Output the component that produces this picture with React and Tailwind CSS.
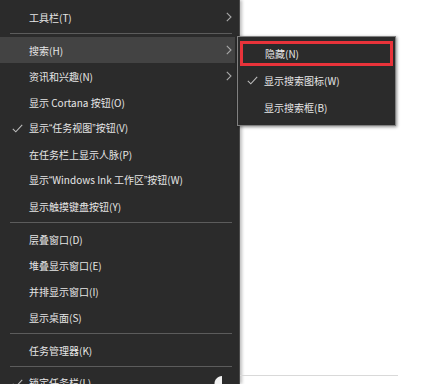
import React from "react";

const Check = ({ className = "" }) => (
  <svg width="11" height="9" viewBox="0 0 11 9" className={className}>
    <path d="M0.8 4.8 L3.8 7.8 L10.2 0.8" fill="none" stroke="#bdbdbd" strokeWidth="1.1" />
  </svg>
);

const Chevron = () => (
  <svg width="6" height="10" viewBox="0 0 6 10">
    <path d="M0.8 0.8 L5 5 L0.8 9.2" fill="none" stroke="#a8a8a8" strokeWidth="1.1" />
  </svg>
);

const Q = ({ children }) => <span className="font-['Liberation_Sans',sans-serif]">{children}</span>;

const Row = ({ label, checked, arrow, active, extra }) => (
  <div className={`h-[26px] flex items-center shrink-0 ${active ? "bg-[#434343] mr-[4px]" : ""}`}>
    <div className="w-[29px] shrink-0 flex items-center pl-[12px]">{checked ? <Check /> : null}</div>
    <span className="flex-1 whitespace-nowrap">{label}</span>
    {arrow ? (
      <div className={`flex items-center ${active ? "pr-[3px]" : "pr-[7px]"}`}>
        <Chevron />
      </div>
    ) : null}
    {extra}
  </div>
);

const Sep = () => (
  <div className="h-[7px] shrink-0 flex items-center pl-[10px] pr-[7px]">
    <div className="h-px w-full bg-[#5c5c5c]" />
  </div>
);

export default function App() {
  return (
    <div className="w-[424px] h-[384px] bg-white relative overflow-hidden flex font-['Noto_Sans_CJK_SC','Noto_Sans',sans-serif] text-[10px] text-[#e6e6e6]">
      <div className="w-[240px] h-full bg-[#2b2b2b] border-r border-[#4a4a4a] shadow-[2px_0_3px_rgba(0,0,0,0.25)] flex flex-col pt-[4px] shrink-0">
        <Row label="工具栏(T)" arrow />
        <Sep />
        <Row label="搜索(H)" arrow active />
        <Row label="资讯和兴趣(N)" arrow />
        <Row label="显示 Cortana 按钮(O)" />
        <Row label={<>显示<Q>“</Q>任务视图<Q>”</Q>按钮(V)</>} checked />
        <Row label="在任务栏上显示人脉(P)" />
        <Row label={<>显示<Q>“</Q>Windows Ink 工作区<Q>”</Q>按钮(W)</>} />
        <Row label="显示触摸键盘按钮(Y)" />
        <Sep />
        <Row label="层叠窗口(D)" />
        <Row label="堆叠显示窗口(E)" />
        <Row label="并排显示窗口(I)" />
        <Row label="显示桌面(S)" />
        <Sep />
        <Row label="任务管理器(K)" />
        <Sep />
        <div className="h-[26px] flex items-start shrink-0">
          <div className="w-[29px] shrink-0 flex items-center pl-[12px] h-[26px]">
            <Check />
          </div>
          <span className="flex-1 whitespace-nowrap leading-[26px]">锁定任务栏(L)</span>
          <svg width="9" height="12" viewBox="0 0 9 12" className="mt-[6px] mr-[16px]">
            <path d="M8 0 C3.5 0.5 0.5 3.5 0.5 7.5 L0.5 12 L8 12 Z" fill="#f2f2f2" />
          </svg>
        </div>
      </div>

      <div className="flex-1 flex flex-col">
        <div className="h-[375px]" />
        <div className="h-px w-[158px] bg-[#d9d9d9]" />
      </div>

      <div className="absolute left-[237px] top-[36px] w-[159px] h-[90px] bg-[#2b2b2b] border border-[#808080] shadow-[1px_1px_3px_rgba(0,0,0,0.45)] flex flex-col pt-[3px]">
        <div className="h-[27px] flex items-center px-[2px]">
          <div className="h-[25px] w-full border-[3px] border-[#e8333a] flex items-center pl-[22px]">
            <span>隐藏(N)</span>
          </div>
        </div>
        <div className="h-[27px] flex items-center">
          <div className="w-[26px] flex items-center pl-[9px]">
            <Check />
          </div>
          <span>显示搜索图标(W)</span>
        </div>
        <div className="h-[27px] flex items-center pl-[26px]">
          <span>显示搜索框(B)</span>
        </div>
      </div>
    </div>
  );
}
